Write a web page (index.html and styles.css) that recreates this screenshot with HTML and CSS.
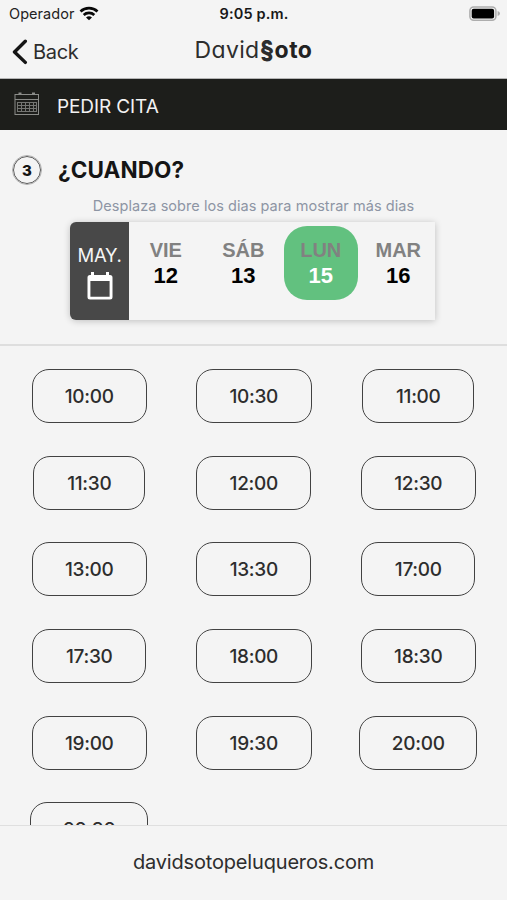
FILE: index.html
```html
<!DOCTYPE html>
<html lang="es">
<head>
<meta charset="utf-8">
<title>Pedir cita</title>
<link rel="stylesheet" href="styles.css">
</head>
<body>
<div class="app">
  <header class="status">
    <div class="status-left"><span class="carrier">Operador</span>
      <svg class="wifi" width="20" height="15" viewBox="0 0 20 15" fill="none" stroke="#080808" stroke-width="2.7"><path d="M1.5 5.5C6.2 1.1 13.8 1.1 18.5 5.5M4.7 9C7.7 6.2 12.3 6.2 15.3 9"/><path d="M10 14.3 7 11.4Q10 8.9 13 11.4Z" fill="#080808" stroke="none"/></svg>
    </div>
    <span class="clock">9:05 p.m.</span>
    <svg class="battery" width="32" height="16" viewBox="0 0 32 16"><rect x=".9" y=".9" width="26" height="13.4" rx="3.8" fill="#f4f4f4" stroke="#adadad" stroke-width="1.5"/><rect x="2.7" y="2.7" width="22.4" height="9.8" rx="2" fill="#000"/><path d="M28.6 5Q31 5.6 31 7.5T28.6 10Z" fill="#adadad"/></svg>
  </header>
  <nav class="nav">
    <a class="back"><svg width="16" height="26" viewBox="0 0 16 26" fill="none" stroke="#151515" stroke-width="3.4" stroke-linecap="round" stroke-linejoin="round"><path d="M13.3 2.2 2.5 13 13.3 23.4"/></svg><span>Back</span></a>
    <div class="logo"><span class="logo-thin">David</span><span class="logo-sign">§</span><span class="logo-bold">oto</span></div>
  </nav>
  <div class="banner">
    <svg width="26" height="24" viewBox="0 0 26 24" fill="none" stroke="#8b8c89" stroke-width="1"><rect x="1" y="2.5" width="23.5" height="20"/><path d="M1 7.5H24.5"/><path d="M4.5 1.5H7.5M18 1.5H21" stroke-width="2"/><path d="M3 10.5H23M3 13.5H23M3 16.5H23M3 19.5H22M3.5 10V20M7.5 10V20M11.5 10V20M15.5 10V20M19.5 10V20M22.5 10V20" stroke="#747572"/></svg>
    <span>PEDIR CITA</span>
  </div>
  <section class="when">
    <div class="heading"><span class="step">3</span><h1>¿CUANDO?</h1></div>
    <p class="hint">Desplaza sobre los dias para mostrar más dias</p>
    <div class="calendar">
      <div class="month"><span>MAY.</span>
        <svg width="26" height="28" viewBox="0 0 26 28"><path fill="#fff" fill-rule="evenodd" d="M4 0H7V3H19V0H22V3H23Q25.5 3 25.5 5.5V25Q25.5 27.5 23 27.5H3Q.5 27.5 .5 25V5.5Q.5 3 3 3H4ZM3.4 9V24.8H22.6V9Z"/></svg>
      </div>
      <div class="days">
        <div class="day"><span class="name">VIE</span><span class="num">12</span></div>
        <div class="day"><span class="name">SÁB</span><span class="num">13</span></div>
        <div class="day selected"><span class="name">LUN</span><span class="num">15</span></div>
        <div class="day"><span class="name">MAR</span><span class="num">16</span></div>
      </div>
    </div>
  </section>
  <main class="slots">
    <button class="w116">10:00</button><button class="w116">10:30</button><button class="w113">11:00</button>
    <button class="w113">11:30</button><button class="w115">12:00</button><button class="w115">12:30</button>
    <button class="w116">13:00</button><button class="w115">13:30</button><button class="w114">17:00</button>
    <button class="w114">17:30</button><button class="w116">18:00</button><button class="w116">18:30</button>
    <button class="w116">19:00</button><button class="w116">19:30</button><button class="w118">20:00</button>
    <button class="w118">20:30</button>
  </main>
  <footer class="footer"><span>davidsotopeluqueros.com</span></footer>
</div>
</body>
</html>
```
FILE: styles.css
```css
* { box-sizing: border-box; }
body { margin: 0; background: #f4f4f4; color: #2d2d2d; font-family: Inter, sans-serif; }
.app { height: 900px; display: flex; flex-direction: column; overflow: hidden; }
.status { height: 27px; flex: none; display: grid; grid-template-columns: 1fr auto 1fr; align-items: center; padding: 0 6px 0 9px; color: #222; }
.status-left { display: flex; align-items: center; gap: 5px; font-size: 14.5px; letter-spacing: .05px; }
.wifi { margin-bottom: 1px; }
.clock { font-size: 14.5px; font-weight: 600; letter-spacing: .15px; color: #181818; margin-right: 2px; }
.battery { justify-self: end; }
.nav { height: 52px; flex: none; display: grid; grid-template-columns: 1fr auto 1fr; padding: 0 12px; border-bottom: 1px solid #b5b5b5; }
.back { display: flex; align-items: center; gap: 5px; height: 50px; font-size: 20px; letter-spacing: -.3px; }
.logo { display: flex; align-items: center; height: 45px; font-size: 23px; color: #2d2d2d; }
.logo-thin { font-weight: 400; letter-spacing: .35px; font-feature-settings: "cv11"; }
.logo-sign { width: 15px; text-align: center; font-size: 24px; font-weight: 800; }
.logo-bold { font-weight: 700; letter-spacing: .5px; color: #222; }
.banner { height: 51px; flex: none; display: flex; align-items: center; gap: 17px; padding: 0 14px; background: #1d1e1b; color: #f2f2f2; font-size: 19px; letter-spacing: -.1px; }
.banner svg { margin-bottom: 1px; }
.banner span { padding-top: 3px; }
.when { height: 216px; flex: none; border-bottom: 2px solid #dedede; padding-top: 24px; }
.heading { height: 32px; display: flex; align-items: center; gap: 17px; padding-left: 13px; }
.step { width: 28px; height: 28px; border: 1.5px solid #555; outline: .5px solid #b0b0b0; border-radius: 50%; display: grid; place-items: center; font-size: 15px; font-weight: 800; color: #151515; }
h1 { margin: 0; font-size: 22.5px; font-weight: 700; letter-spacing: .1px; line-height: 30px; padding-bottom: 1px; color: #151515; }
.hint { margin: 9px 0 0; text-align: center; font-size: 14.5px; line-height: 22px; letter-spacing: .05px; color: #8d95a4; }
.calendar { width: 365px; height: 98px; margin: 5px 0 0 70px; display: flex; border-radius: 7px 0 0 7px; box-shadow: 0 1px 7px rgba(0,0,0,.22); }
.month { width: 59px; flex: none; display: flex; flex-direction: column; align-items: center; padding-top: 21px; background: #484848; border-radius: 6px 0 0 6px; color: #f5f5f5; font-size: 18.5px; line-height: 24px; letter-spacing: -.4px; }
.month svg { margin-top: 5px; }
.days { display: flex; gap: 4px; padding-top: 4px; background: #f4f4f4; flex: 1; }
.day { width: 73.5px; height: 73.5px; border-radius: 23px; display: flex; flex-direction: column; align-items: center; padding-top: 11px; font-family: "Liberation Sans", sans-serif; font-weight: 700; line-height: 26px; }
.name { color: #818181; font-size: 20px; }
.num { color: #000; font-size: 22px; }
.selected { background: #62c17f; }
.selected .num { color: #fff; }
.slots { height: 479px; flex: none; overflow: hidden; display: grid; grid-template-columns: repeat(3, 164.5px); grid-auto-rows: 54px; row-gap: 32.7px; justify-items: center; padding: 23px 0 0 7px; }
.slots button { height: 54px; padding: 1px 0 0; border: 1px solid #424242; border-radius: 17px; background: transparent; color: #2d2d2d; font: 500 19px Inter, sans-serif; letter-spacing: -.3px; }
.w113 { width: 112px; }
.w114 { width: 114px; }
.w115 { width: 115px; }
.w116 { width: 115.5px; }
.w118 { width: 118px; }
.footer { flex: 1; display: flex; justify-content: center; align-items: center; padding-bottom: 2px; border-top: 1px solid #dfdfdf; font-size: 20px; letter-spacing: -.17px; }
```
